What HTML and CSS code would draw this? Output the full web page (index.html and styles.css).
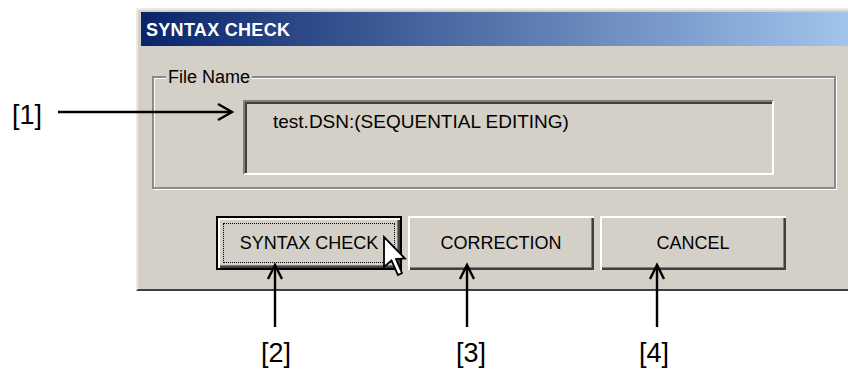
FILE: index.html
```html
<!DOCTYPE html>
<html>
<head>
    <title>SYNTAX CHECK</title>
    <link rel="stylesheet" href="styles.css">
</head>
<body>

<div class="stage">
    <div class="dialog">
        <div class="title-bar">SYNTAX CHECK</div>
        <div class="dialog-body">
            <fieldset class="group">
                <legend>File Name</legend>
                <div class="file-box">test.DSN:(SEQUENTIAL EDITING)</div>
            </fieldset>
            <div class="buttons">
                <button class="btn btn-default"><span class="focus">SYNTAX CHECK</span></button>
                <button class="btn"><span>CORRECTION</span></button>
                <button class="btn"><span>CANCEL</span></button>
            </div>
        </div>
    </div>

    <!-- callout arrows + mouse pointer drawn over the dialog -->
    <svg class="marks" width="848" height="374" viewBox="0 0 848 374">
        <g fill="none" stroke="#000" stroke-width="2.4">
            <line x1="58" y1="112" x2="231" y2="112"/>
            <polyline points="218,104 232,112 218,120"/>
            <line x1="275" y1="266" x2="275" y2="327"/>
            <polyline points="268,279 275,265 282,279"/>
            <line x1="467" y1="266" x2="467" y2="327"/>
            <polyline points="460,279 467,265 474,279"/>
            <line x1="657" y1="266" x2="657" y2="327"/>
            <polyline points="650,279 657,265 664,279"/>
        </g>
        <path class="pointer" transform="translate(384 237)"
              d="M0 0 L0 30 L7.5 23.5 L14 38 L18 36 L12 22 L21 21.5 Z"/>
    </svg>

    <span class="callout callout-1">[1]</span>
    <span class="callout callout-2">[2]</span>
    <span class="callout callout-3">[3]</span>
    <span class="callout callout-4">[4]</span>
</div>

</body>
</html>
```

FILE: styles.css
```css
body {
    margin: 0;
    background: #fff;
    font-family: "Liberation Sans", Arial, sans-serif;
    overflow: hidden;
}
.stage {
    position: relative;
    width: 848px;
    height: 374px;
    overflow: hidden;
}
.dialog {
    width: 730px;
    margin: 8px 0 0 136px;
    padding: 2px 2px 2px 3px;
    background: #d4d0c8;
    border: 2px solid;
    border-color: #eceae6 #404040 #404040 #eceae6;
}
.title-bar {
    height: 34px;
    box-sizing: border-box;
    padding: 3px 0 0 5px;
    line-height: 31px;
    font-size: 18px;
    font-weight: bold;
    letter-spacing: 0.3px;
    color: #fff;
    background: linear-gradient(to right, #0a246a, #a6caf0);
}
.dialog-body {
    padding: 0 0 17px;
}
.group {
    width: 684px;
    box-sizing: border-box;
    margin: 21px 0 0 11px;
    padding: 0 0 12px;
    min-inline-size: auto;
    border: 2px solid #8a8a8a;
    box-shadow: inset 1px 1px #fff, 1px 1px #fff;
}
.group legend {
    margin-left: 12px;
    padding: 0 2px;
    font-size: 18px;
    line-height: 20px;
    color: #000;
    background: #d4d0c8;
}
.file-box {
    width: 531px;
    height: 75px;
    box-sizing: border-box;
    margin: 13px 0 0 89px;
    padding: 9px 0 0 28px;
    font-size: 19px;
    color: #000;
    border: 2px solid;
    border-color: #808080 #fff #fff #808080;
    box-shadow: inset 2px 2px #404040;
}
.buttons {
    display: flex;
    gap: 6px;
    margin: 27px 0 0 75px;
}
.btn {
    display: flex;
    width: 186px;
    height: 54px;
    box-sizing: border-box;
    padding: 5px;
    border: 0;
    background: #d4d0c8;
    box-shadow: inset 2px 2px #fff, inset -2px -2px #404040, inset -3px -3px #808080;
    font-family: "Liberation Sans", Arial, sans-serif;
    font-size: 18px;
    color: #000;
}
.btn span {
    flex: 1;
    display: flex;
    align-items: center;
    justify-content: center;
    border: 1px dotted transparent;
}
.btn-default {
    border: 2px solid #000;
}
.btn-default .focus {
    border-color: #000;
}
.marks {
    position: absolute;
    left: 0;
    top: 0;
    pointer-events: none;
}
.pointer {
    fill: #fff;
    stroke: #000;
    stroke-width: 1.8;
    stroke-linejoin: miter;
}
.callout {
    position: absolute;
    width: 40px;
    font-size: 27px;
    line-height: 27px;
    text-align: center;
    color: #000;
}
.callout-1 { left: 7px; top: 102px; }
.callout-2 { left: 256px; top: 340px; }
.callout-3 { left: 451px; top: 340px; }
.callout-4 { left: 634px; top: 340px; }
```
